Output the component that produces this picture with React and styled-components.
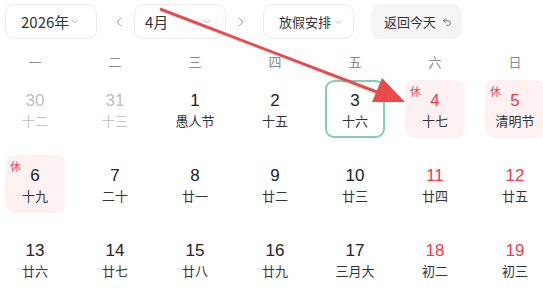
import React from "react";
import styled, { createGlobalStyle } from "styled-components";
import { ChevronDown, ChevronLeft, ChevronRight, Undo2 } from "lucide-react";

const Global = createGlobalStyle`
  html, body { margin: 0; padding: 0; background: #fff; overflow: hidden; }
  body { font-family: "Liberation Sans", "Noto Sans CJK SC", sans-serif; }
  * { box-sizing: border-box; }
`;

const Page = styled.div`
  position: relative;
  width: 543px;
  height: 305px;
  padding: 4px 0 0 5px;
  overflow: hidden;
`;

const Toolbar = styled.div`
  display: flex;
  align-items: center;
  height: 35px;
`;

const Select = styled.div`
  flex-shrink: 0;
  display: flex;
  align-items: center;
  justify-content: space-between;
  white-space: nowrap;
  width: ${(p) => p.$w}px;
  height: 35px;
  padding: 0 ${(p) => p.$pr}px 0 ${(p) => p.$pl}px;
  border: 1px solid #ebebeb;
  border-radius: 9px;
  margin-right: ${(p) => p.$mr || 0}px;
  background: #fff;
`;

const SelectText = styled.span`
  font-family: "Noto Sans CJK SC", sans-serif;
  font-size: ${(p) => p.$fs || 14}px;
  color: #333;
`;

const Nav = styled.div`
  flex-shrink: 0;
  display: flex;
  align-items: center;
  justify-content: center;
  width: 37px;
  padding-left: ${(p) => p.$pl || 0}px;
  padding-right: ${(p) => p.$pr || 0}px;
  color: #9a9a9a;
`;

const Button = styled.div`
  flex-shrink: 0;
  display: flex;
  align-items: center;
  gap: 6px;
  height: 35px;
  width: 91px;
  padding-left: 13px;
  border-radius: 9px;
  background: #f5f5f5;
  white-space: nowrap;
  font-family: "Noto Sans CJK SC", sans-serif;
  font-size: 13px;
  color: #333;
`;

const Grid = styled.div`
  display: grid;
  grid-template-columns: repeat(7, 60px);
  column-gap: 20px;
  row-gap: ${(p) => p.$rg || 0}px;
  margin-top: ${(p) => p.$mt}px;
`;

const WeekHead = styled.div`
  height: 26px;
  line-height: 26px;
  text-align: center;
  font-family: "Noto Sans CJK SC", sans-serif;
  font-size: 13px;
  color: #8a8a8a;
`;

const Cell = styled.div`
  position: relative;
  height: 58px;
  display: flex;
  flex-direction: column;
  align-items: center;
  padding-top: 8px;
  border-radius: 9px;
  border: 2px solid ${(p) => (p.$today ? "#86cdb0" : "transparent")};
  background: ${(p) => (p.$rest ? "#fdf1f1" : "transparent")};
`;

const DayNum = styled.div`
  height: 22px;
  line-height: 22px;
  font-size: 17px;
  color: ${(p) => (p.$muted ? "#bdbdbd" : p.$red ? "#ef3a4c" : "#222")};
`;

const Lunar = styled.div`
  height: 18px;
  line-height: 18px;
  font-family: "Noto Sans CJK SC", sans-serif;
  font-size: 13px;
  color: ${(p) => (p.$muted ? "#c4c4c4" : "#333")};
`;

const RestTag = styled.span`
  position: absolute;
  top: 3px;
  left: 3px;
  font-family: "Noto Sans CJK SC", sans-serif;
  font-size: 11px;
  line-height: 12px;
  color: #ef4a5a;
`;

const Overlay = styled.svg`
  position: absolute;
  left: 0;
  top: 0;
  pointer-events: none;
`;

const weekdays = ["一", "二", "三", "四", "五", "六", "日"];

const days = [
  { n: 30, l: "十二", muted: true },
  { n: 31, l: "十三", muted: true },
  { n: 1, l: "愚人节" },
  { n: 2, l: "十五" },
  { n: 3, l: "十六", today: true },
  { n: 4, l: "十七", red: true, rest: true },
  { n: 5, l: "清明节", red: true, rest: true },
  { n: 6, l: "十九", rest: true },
  { n: 7, l: "二十" },
  { n: 8, l: "廿一" },
  { n: 9, l: "廿二" },
  { n: 10, l: "廿三" },
  { n: 11, l: "廿四", red: true },
  { n: 12, l: "廿五", red: true },
  { n: 13, l: "廿六" },
  { n: 14, l: "廿七" },
  { n: 15, l: "廿八" },
  { n: 16, l: "廿九" },
  { n: 17, l: "三月大" },
  { n: 18, l: "初二", red: true },
  { n: 19, l: "初三", red: true },
];

export default function App() {
  return (
    <>
      <Global />
      <Page>
        <Toolbar>
          <Select $w={92} $pl={15} $pr={15}>
            <SelectText $fs={15}>2026年</SelectText>
            <ChevronDown size={13} strokeWidth={1.4} color="#999" />
          </Select>
          <Nav $pl={6}>
            <ChevronLeft size={16} strokeWidth={1.4} />
          </Nav>
          <Select $w={92} $pl={10} $pr={12}>
            <SelectText $fs={15}>4月</SelectText>
            <ChevronDown size={13} strokeWidth={1.4} color="#999" />
          </Select>
          <Nav $pr={8}>
            <ChevronRight size={16} strokeWidth={1.4} />
          </Nav>
          <Select $w={91} $pl={15} $pr={9} $mr={17}>
            <SelectText $fs={13}>放假安排</SelectText>
            <ChevronDown size={12} strokeWidth={1.4} color="#999" />
          </Select>
          <Button>
            返回今天
            <Undo2 size={10} strokeWidth={2} color="#666" />
          </Button>
        </Toolbar>
        <Grid $mt={10}>
          {weekdays.map((w) => (
            <WeekHead key={w}>{w}</WeekHead>
          ))}
        </Grid>
        <Grid $mt={5} $rg={17}>
          {days.map((d, i) => (
            <Cell key={i} $today={d.today} $rest={d.rest}>
              {d.rest && <RestTag>休</RestTag>}
              <DayNum $muted={d.muted} $red={d.red}>{d.n}</DayNum>
              <Lunar $muted={d.muted}>{d.l}</Lunar>
            </Cell>
          ))}
        </Grid>
        <Overlay width="543" height="305" viewBox="0 0 543 305">
          <line x1="160" y1="9" x2="382" y2="94" stroke="#ea4a4a" strokeWidth="3" />
          <polygon points="372,102 382,78 405,102" fill="#ea4a4a" />
        </Overlay>
      </Page>
    </>
  );
}
